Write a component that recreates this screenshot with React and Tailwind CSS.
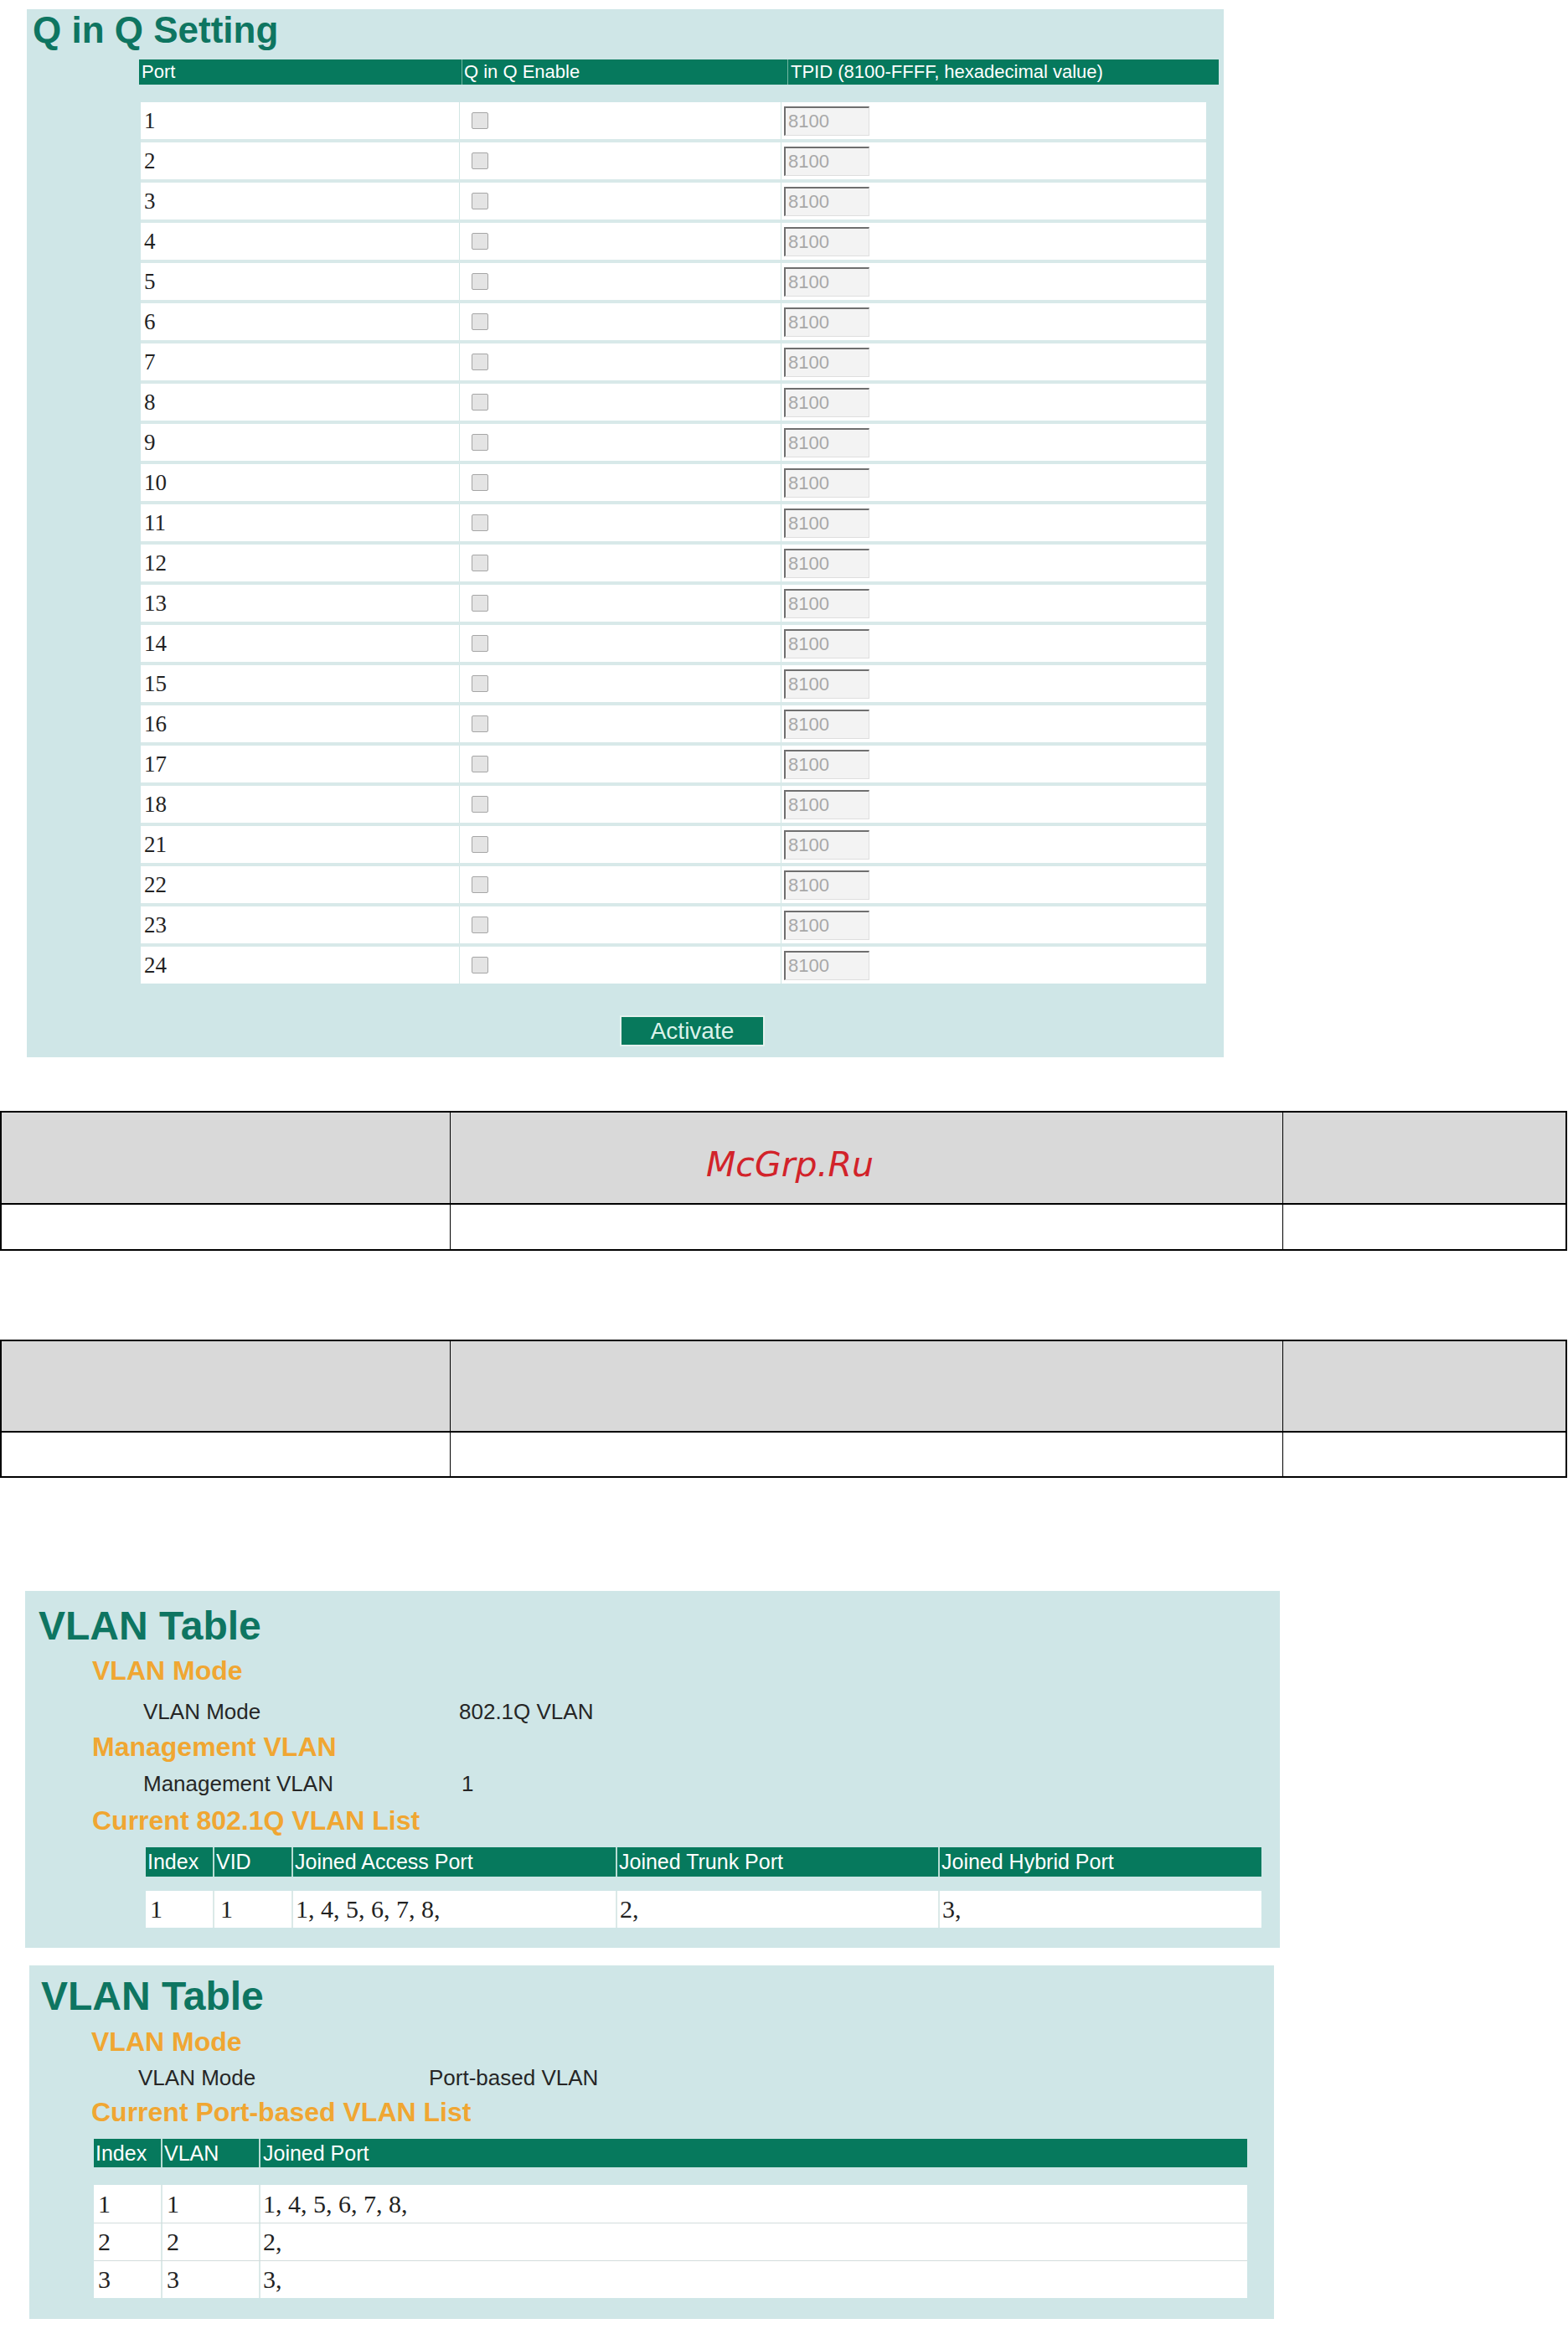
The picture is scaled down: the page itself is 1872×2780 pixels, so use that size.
import React from "react";

const ports = [1, 2, 3, 4, 5, 6, 7, 8, 9, 10, 11, 12, 13, 14, 15, 16, 17, 18, 21, 22, 23, 24];

function QinQRow({ port }) {
  return (
    <div className="flex h-[44px] bg-white">
      <div className="w-[380px] pl-[4px] flex items-center font-['Liberation_Serif',serif] text-[27px] text-[#222]">
        {port}
      </div>
      <div className="w-[384px] pl-[14px] flex items-center border-l border-[#d2e6e4]">
        <div className="w-[20px] h-[20px] border border-[#a6a6a6] bg-[#e4e4e4] rounded-[2px]" />
      </div>
      <div className="flex-1 pl-[3px] flex items-center border-l border-[#cfe6e3]">
        <div className="w-[102px] h-[35px] border-t-2 border-l-2 border-t-[#6f6f6f] border-l-[#6f6f6f] border-r border-b border-r-[#dedede] border-b-[#dedede] bg-[#f3f3f3] pl-[3px] flex items-center text-[22px] text-[#a8a8a8]">
          8100
        </div>
      </div>
    </div>
  );
}

function GrayTable({ headH, rowH, watermark }) {
  return (
    <div className="w-[1871px] border-2 border-black">
      <div className="flex bg-[#d9d9d9]" style={{ height: headH }}>
        <div className="w-[536px] border-r border-black" />
        <div className="w-[994px] border-r border-black pl-[305px] pt-[16px] flex items-center">
          {watermark && (
            <span className="font-['DejaVu_Sans',sans-serif] italic text-[41px] leading-[41px] text-[#d2232a]">
              McGrp.Ru
            </span>
          )}
        </div>
        <div className="flex-1" />
      </div>
      <div className="flex bg-white border-t-2 border-black" style={{ height: rowH }}>
        <div className="w-[536px] border-r border-black" />
        <div className="w-[994px] border-r border-black" />
        <div className="flex-1" />
      </div>
    </div>
  );
}

function Heading({ children, className = "" }) {
  return (
    <div className={"text-[32px] leading-[32px] font-bold text-[#f0a632] " + className}>{children}</div>
  );
}

function Title({ children, className = "" }) {
  return (
    <div className={"text-[48px] leading-[48px] font-bold text-[#0e7561] " + className}>{children}</div>
  );
}

export default function App() {
  return (
    <div className="w-[1872px] min-h-[2780px] bg-white font-['Liberation_Sans',Arial,sans-serif] pt-[11px] overflow-hidden">
      {/* Q in Q Setting panel */}
      <div className="ml-[32px] w-[1429px] bg-[#cfe6e7] pt-[3px] pb-[13px]">
        <div className="ml-[7px] text-[44px] leading-[44px] font-bold text-[#0e7561]">Q in Q Setting</div>
        <div className="mt-[13px] ml-[134px] w-[1289px] h-[30px] bg-[#06795d] flex text-white text-[22px] leading-[22px]">
          <div className="w-[385px] pl-[3px] flex items-center">Port</div>
          <div className="w-[389px] pl-[2px] flex items-center border-l border-[#74b7a3]">Q in Q Enable</div>
          <div className="flex-1 pl-[3px] flex items-center border-l border-[#74b7a3]">
            TPID (8100-FFFF, hexadecimal value)
          </div>
        </div>
        <div className="mt-[21px] ml-[136px] w-[1272px] flex flex-col gap-[4px] bg-[#d8e9e9]">
          {ports.map((p) => (
            <QinQRow key={p} port={p} />
          ))}
        </div>
        <div className="mt-[38px] ml-[708px] w-[173px] h-[37px] bg-[#07795c] border-2 border-[#e4f1ee] flex items-center justify-center text-[28px] leading-[28px] text-[#dcf3eb]">
          Activate
        </div>
      </div>

      {/* Gray description tables */}
      <div className="mt-[64px]">
        <GrayTable headH={108} rowH={55} watermark />
      </div>
      <div className="mt-[106px]">
        <GrayTable headH={107} rowH={54} />
      </div>

      {/* VLAN Table - 802.1Q */}
      <div className="mt-[135px] ml-[30px] w-[1498px] bg-[#cfe6e7] pt-[18px] pb-[24px]">
        <Title>
          <span className="ml-[16px]">VLAN Table</span>
        </Title>
        <Heading className="mt-[13px] ml-[80px]">VLAN Mode</Heading>
        <div className="mt-[20px] ml-[141px] flex text-[26px] leading-[26px] text-[#262626]">
          <div className="w-[377px]">VLAN Mode</div>
          <div>802.1Q VLAN</div>
        </div>
        <Heading className="mt-[13px] ml-[80px]">Management VLAN</Heading>
        <div className="mt-[15px] ml-[141px] flex text-[26px] leading-[26px] text-[#262626]">
          <div className="w-[380px]">Management VLAN</div>
          <div>1</div>
        </div>
        <Heading className="mt-[15px] ml-[80px]">Current 802.1Q VLAN List</Heading>
        <div className="mt-[16px] ml-[144px] w-[1332px]">
          <div className="flex h-[35px] bg-[#06795d] text-white text-[25px] leading-[25px]">
            <div className="w-[80px] pl-[2px] flex items-center">Index</div>
            <div className="w-[94px] pl-[2px] flex items-center border-l-2 border-[#b9dcd4]">VID</div>
            <div className="w-[387px] pl-[2px] flex items-center border-l-2 border-[#b9dcd4]">Joined Access Port</div>
            <div className="w-[385px] pl-[2px] flex items-center border-l-2 border-[#b9dcd4]">Joined Trunk Port</div>
            <div className="flex-1 pl-[2px] flex items-center border-l-2 border-[#b9dcd4]">Joined Hybrid Port</div>
          </div>
          <div className="mt-[17px] flex h-[44px] bg-white font-['Liberation_Serif',serif] text-[30px] leading-[30px] text-[#222]">
            <div className="w-[80px] pl-[5px] flex items-center">1</div>
            <div className="w-[94px] pl-[7px] flex items-center border-l-2 border-[#dbe9e8]">1</div>
            <div className="w-[387px] pl-[3px] flex items-center border-l-2 border-[#dbe9e8]">1, 4, 5, 6, 7, 8,</div>
            <div className="w-[385px] pl-[3px] flex items-center border-l-2 border-[#dbe9e8]">2,</div>
            <div className="flex-1 pl-[3px] flex items-center border-l-2 border-[#dbe9e8]">3,</div>
          </div>
        </div>
      </div>

      {/* VLAN Table - Port-based */}
      <div className="mt-[21px] ml-[35px] w-[1486px] bg-[#cfe6e7] pt-[13px] pb-[25px]">
        <Title>
          <span className="ml-[14px]">VLAN Table</span>
        </Title>
        <Heading className="mt-[14px] ml-[74px]">VLAN Mode</Heading>
        <div className="mt-[14px] ml-[130px] flex text-[26px] leading-[26px] text-[#262626]">
          <div className="w-[347px]">VLAN Mode</div>
          <div>Port-based VLAN</div>
        </div>
        <Heading className="mt-[12px] ml-[74px]">Current Port-based VLAN List</Heading>
        <div className="mt-[16px] ml-[77px] w-[1377px]">
          <div className="flex h-[34px] bg-[#06795d] text-white text-[25px] leading-[25px]">
            <div className="w-[80px] pl-[2px] flex items-center">Index</div>
            <div className="w-[117px] pl-[2px] flex items-center border-l-2 border-[#b9dcd4]">VLAN</div>
            <div className="flex-1 pl-[3px] flex items-center border-l-2 border-[#b9dcd4]">Joined Port</div>
          </div>
          <div className="mt-[21px] bg-white font-['Liberation_Serif',serif] text-[30px] leading-[30px] text-[#222]">
            {[
              ["1", "1", "1, 4, 5, 6, 7, 8,"],
              ["2", "2", "2,"],
              ["3", "3", "3,"],
            ].map((r, i) => (
              <div
                key={i}
                className={"flex h-[45px] " + (i > 0 ? "border-t border-[#d3dcdc]" : "")}
              >
                <div className="w-[80px] pl-[5px] flex items-center">{r[0]}</div>
                <div className="w-[117px] pl-[5px] flex items-center border-l-2 border-[#dbe9e8]">{r[1]}</div>
                <div className="flex-1 pl-[3px] flex items-center border-l-2 border-[#dbe9e8]">{r[2]}</div>
              </div>
            ))}
          </div>
        </div>
      </div>
    </div>
  );
}
